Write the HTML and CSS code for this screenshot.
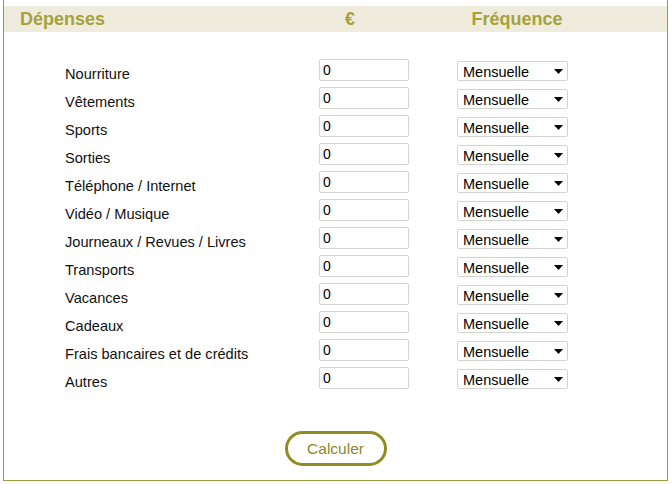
FILE: index.html
```html
<!DOCTYPE html>
<html lang="fr">
<head>
<meta charset="utf-8">
<title>Dépenses</title>
<link rel="stylesheet" href="styles.css">
</head>
<body>
<div class="panel">
  <div class="head">
    <div class="h-label">Dépenses</div>
    <div class="h-amount">€</div>
    <div class="h-freq">Fréquence</div>
  </div>
  <div class="rows">
    <div class="row"><label class="lbl">Nourriture</label><input class="amt" type="text" value="0"><div class="sel"><select><option>Mensuelle</option></select><svg class="arr" width="9" height="5" viewBox="0 0 9 5"><path d="M0 0H9L4.5 5Z"/></svg></div></div>
    <div class="row"><label class="lbl">Vêtements</label><input class="amt" type="text" value="0"><div class="sel"><select><option>Mensuelle</option></select><svg class="arr" width="9" height="5" viewBox="0 0 9 5"><path d="M0 0H9L4.5 5Z"/></svg></div></div>
    <div class="row"><label class="lbl">Sports</label><input class="amt" type="text" value="0"><div class="sel"><select><option>Mensuelle</option></select><svg class="arr" width="9" height="5" viewBox="0 0 9 5"><path d="M0 0H9L4.5 5Z"/></svg></div></div>
    <div class="row"><label class="lbl">Sorties</label><input class="amt" type="text" value="0"><div class="sel"><select><option>Mensuelle</option></select><svg class="arr" width="9" height="5" viewBox="0 0 9 5"><path d="M0 0H9L4.5 5Z"/></svg></div></div>
    <div class="row"><label class="lbl">Téléphone / Internet</label><input class="amt" type="text" value="0"><div class="sel"><select><option>Mensuelle</option></select><svg class="arr" width="9" height="5" viewBox="0 0 9 5"><path d="M0 0H9L4.5 5Z"/></svg></div></div>
    <div class="row"><label class="lbl">Vidéo / Musique</label><input class="amt" type="text" value="0"><div class="sel"><select><option>Mensuelle</option></select><svg class="arr" width="9" height="5" viewBox="0 0 9 5"><path d="M0 0H9L4.5 5Z"/></svg></div></div>
    <div class="row"><label class="lbl">Journeaux / Revues / Livres</label><input class="amt" type="text" value="0"><div class="sel"><select><option>Mensuelle</option></select><svg class="arr" width="9" height="5" viewBox="0 0 9 5"><path d="M0 0H9L4.5 5Z"/></svg></div></div>
    <div class="row"><label class="lbl">Transports</label><input class="amt" type="text" value="0"><div class="sel"><select><option>Mensuelle</option></select><svg class="arr" width="9" height="5" viewBox="0 0 9 5"><path d="M0 0H9L4.5 5Z"/></svg></div></div>
    <div class="row"><label class="lbl">Vacances</label><input class="amt" type="text" value="0"><div class="sel"><select><option>Mensuelle</option></select><svg class="arr" width="9" height="5" viewBox="0 0 9 5"><path d="M0 0H9L4.5 5Z"/></svg></div></div>
    <div class="row"><label class="lbl">Cadeaux</label><input class="amt" type="text" value="0"><div class="sel"><select><option>Mensuelle</option></select><svg class="arr" width="9" height="5" viewBox="0 0 9 5"><path d="M0 0H9L4.5 5Z"/></svg></div></div>
    <div class="row"><label class="lbl">Frais bancaires et de crédits</label><input class="amt" type="text" value="0"><div class="sel"><select><option>Mensuelle</option></select><svg class="arr" width="9" height="5" viewBox="0 0 9 5"><path d="M0 0H9L4.5 5Z"/></svg></div></div>
    <div class="row"><label class="lbl">Autres</label><input class="amt" type="text" value="0"><div class="sel"><select><option>Mensuelle</option></select><svg class="arr" width="9" height="5" viewBox="0 0 9 5"><path d="M0 0H9L4.5 5Z"/></svg></div></div>
  </div>
  <div class="actions">
    <button class="btn" type="button">Calculer</button>
  </div>
</div>
</body>
</html>
```

FILE: styles.css
```css
* { box-sizing: border-box; }
html, body { margin: 0; padding: 0; background: #ffffff; }
body { font-family: "Liberation Sans", Arial, sans-serif; color: #111; }

.panel {
  margin-left: 3px;
  width: 665px;
  height: 481px;
  border-left: 1px solid #9d9b3b;
  border-right: 1px solid #9d9b3b;
  border-bottom: 1px solid #9d9b3b;
  padding-top: 6px;
  display: flex;
  flex-direction: column;
}

.head {
  display: grid;
  grid-template-columns: 280px 100px 234px;
  height: 26px;
  line-height: 26px;
  padding-left: 16px;
  background: #efecde;
  font-size: 18px;
  font-weight: bold;
  color: #a5a23c;
}
.h-amount, .h-freq { text-align: center; }

.rows {
  display: flex;
  flex-direction: column;
  gap: 6px;
  padding-left: 61px;
  margin-top: 27px;
}
.row {
  display: grid;
  grid-template-columns: 254px 90px 111px;
  align-items: center;
  height: 22px;
}
.lbl {
  font-size: 14.6px;
  line-height: 16px;
  color: #111;
  align-self: end;
  margin-bottom: -1px;
}
.amt {
  width: 90px;
  height: 22px;
  border: 1px solid #d3d3d3;
  border-radius: 2px;
  padding: 0 3px;
  font: 14px "Liberation Sans", Arial, sans-serif;
  color: #000;
  background: #fff;
}
.sel {
  position: relative;
  width: 111px;
  height: 20px;
  margin-left: 48px;
  align-self: end;
}
.sel select {
  appearance: none;
  -webkit-appearance: none;
  width: 111px;
  height: 20px;
  border: 1px solid #d3d3d3;
  border-radius: 2px;
  background: #fff;
  padding: 1px 0 0 5px;
  font: 14.5px "Liberation Sans", Arial, sans-serif;
  color: #000;
}
.arr {
  position: absolute;
  right: 5px;
  top: 8px;
  fill: #000;
  pointer-events: none;
}

.actions {
  display: flex;
  justify-content: center;
  margin-top: 42px;
}
.btn {
  width: 102px;
  height: 35px;
  border: 3px solid #908d1e;
  border-radius: 18px;
  background: #fff;
  font: 15.5px "Liberation Sans", Arial, sans-serif;
  color: #8b892c;
  padding: 0;
}
```
